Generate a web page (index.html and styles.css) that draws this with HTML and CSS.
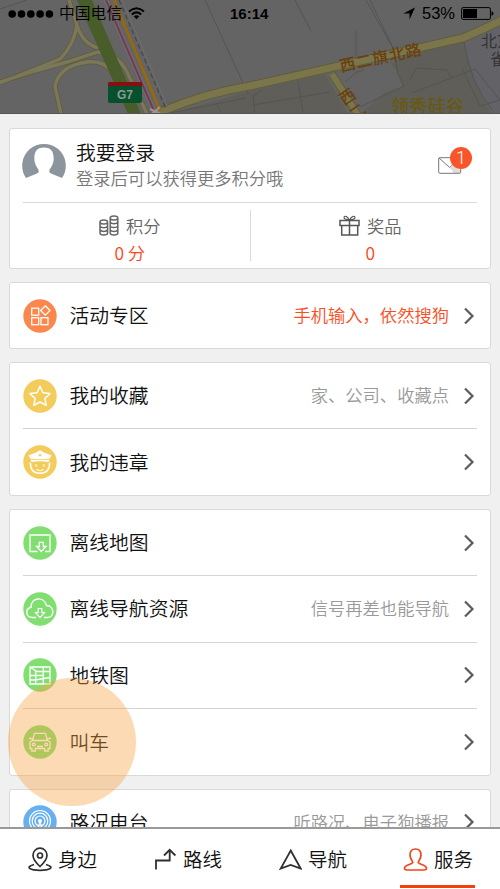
FILE: index.html
```html
<!DOCTYPE html>
<html lang="zh-CN">
<head>
<meta charset="utf-8">
<title>服务</title>
<link rel="stylesheet" href="styles.css">
</head>
<body>
<svg class="symbols" width="0" height="0" aria-hidden="true">
  <symbol id="chev" viewBox="0 0 12 18"><path d="M2 1.500 9.500 9 2 16.500" fill="none" stroke="#5c5c5c" stroke-width="2.200"/></symbol>
</svg>
<div class="screen">
  <header class="map">
    <svg class="map-art" viewBox="0 0 500 114" width="500" height="114">
      <rect width="500" height="114" fill="#646464"/>
      <path d="M390 63 470 36 500 62V114H360L385 92 403 87 396 70Z" fill="#605e59"/>
      <path d="M170 114 250 91 325 74 348 114Z" fill="#605e59"/>
      <path d="M464 38 500 28V114H491Q470 80 464 38Z" fill="#626267"/>
      <g fill="none" stroke="#545454" stroke-width="1">
        <path d="M0 9 27 0M205 0 248 94M295 0 311 31M356 31V62M366 0 394 50M370 0 396 54M165 114 246 98M218 106 222 114M298 82 303 112M253 105 330 92M394 50 398 74 404 86 360 107M410 80 416 68 447 70 452 79M412 93 475 69 500 100M463 70 480 106 500 100M464 42Q470 82 492 110M345 82 357 72 364 70M255 114 253 96 262 90"/>
      </g>
      <g fill="none" stroke="#625d38" stroke-width="5">
        <path d="M0 82 35 71 67 62 98 52Q118 54 127 72L147 114M69 0 77 25Q74 45 60 59L0 83M77 25Q82 43 98 48M61 114 55 86Q59 66 87 62 104 60 112 72"/>
      </g>
      <g fill="none" stroke="#7b775a" stroke-width="3.400">
        <path d="M0 82 35 71 67 62 98 52Q118 54 127 72L147 114M69 0 77 25Q74 45 60 59L0 83M77 25Q82 43 98 48M61 114 55 86Q59 66 87 62 104 60 112 72"/>
      </g>
      <path d="M77 0H92L141 114H128Z" fill="#485d29"/>
      <g fill="none" stroke="#625d38" stroke-width="9"><path d="M158 113Q205 93 250 86L463 38Q484 29 502 20"/><path d="M332 74 358 115" stroke-width="8"/></g>
      <g fill="none" stroke="#7a754b" stroke-width="7"><path d="M158 113Q205 93 250 86L463 38Q484 29 502 20"/><path d="M332 74 358 115" stroke-width="6"/></g>
      <g fill="none">
        <path d="M106 0 154 111" stroke="#737073" stroke-width="4"/>
        <path d="M106 0 154 111" stroke="#763954" stroke-width="2"/>
        <path d="M114 0 160 111" stroke="#9b6807" stroke-width="2.600"/>
        <path d="M119 0 166 109" stroke="#484848" stroke-width="1.300" stroke-dasharray="5 3"/>
        <path d="M122 0 168 108" stroke="#6e6e6e"/>
        <path d="M150 109 161 114M152 114 160 107" stroke="#a1918f" stroke-width="2"/>
      </g>
      <rect x="108" y="82" width="34" height="21" rx="2" fill="#07502d"/>
      <path d="M108 86V84Q108 82 110 82H140Q142 82 142 84V86Z" fill="#861010"/>
      <text class="shield" x="117" y="99">G7</text>
      <g class="road">
        <text transform="translate(341 72) rotate(-12)" textLength="83">西二旗北路</text>
        <text transform="translate(344 106) rotate(-34)">西</text>
        <text transform="translate(354 121) rotate(-34)">二</text>
      </g>
      <text class="place" x="391" y="113" textLength="73">领秀硅谷</text>
      <g class="poi"><text x="481" y="47">北京</text><text x="490" y="65">雀</text></g>
      <path d="M0 113.500H500" stroke="#555"/>
    </svg>
    <div class="status">
      <svg width="46" height="10" viewBox="0 0 46 10"><circle cx="4.200" cy="5" r="3.800"/><circle cx="13.500" cy="5" r="3.800"/><circle cx="22.800" cy="5" r="3.800"/><circle cx="32.100" cy="5" r="3.800"/><circle cx="41.400" cy="5" r="3.800"/></svg>
      <span class="carrier">中国电信</span>
      <svg width="17" height="13" viewBox="0 0 17 13"><g fill="none" stroke="#000" stroke-width="2"><path d="M1 4.500Q8.500-2 16 4.500M3.800 7.500Q8.500 3.300 13.200 7.500"/></g><path d="M5.700 9.300Q8.500 7 11.300 9.300L8.500 12.200Z"/></svg>
      <strong class="clock">16:14</strong>
      <svg class="loc" width="12" height="13" viewBox="0 0 12 13"><path d="M12 .5 6.500 12.500V6.500H.300Z"/></svg>
      <span class="pct">53%</span>
      <svg class="batt" width="33" height="13" viewBox="0 0 33 13"><rect x=".6" y=".6" width="28.800" height="11.800" rx="1.500" fill="none" stroke="#000"/><rect x="2" y="2" width="14" height="9"/><path d="M30.500 4.300Q32.500 4.500 32.500 6.500T30.500 8.700Z"/></svg>
    </div>
  </header>

  <main class="list">
    <section class="card profile">
      <div class="user">
        <svg class="avatar" width="44" height="36" viewBox="0 0 44 36"><path d="M4 35A21.800 21.800 0 1 1 40 35L29 30.500Q26 29 28 26 31 22 31.500 18C32.500 8 28.500 4.500 22 4.500S11.500 8 12.500 18Q13 22 16 26 18 29 15 30.500Z" fill="#8c959d"/></svg>
        <div class="who"><div class="name">我要登录</div><div class="hint">登录后可以获得更多积分哦</div></div>
        <div class="mail">
          <svg width="24" height="17" viewBox="0 0 24 17"><path d="M12 11 16 8.500 23 14V16H16Z" fill="#ddd"/><rect x=".7" y=".7" width="22" height="15.600" rx="1" fill="none" stroke="#777"/><path d="M1 1 11.700 10.500 22 1" fill="none" stroke="#777"/></svg>
          <span class="badge">1</span>
        </div>
      </div>
      <div class="stats">
        <div class="stat">
          <div class="stat-label">
            <svg width="20" height="21" viewBox="0 0 20 21"><g fill="none" stroke="#656565" stroke-width="1.500"><path d="M1 7V18Q1 20 4.800 20T8.600 18V7Q8.600 5 4.800 5T1 7Q1 9 4.800 9T8.600 7M1 11Q2 12.800 4.800 12.800T8.600 11M1 14.700Q2 16.500 4.800 16.500T8.600 14.700M11.200 3V18Q11.200 20 15 20T18.800 18V3Q18.800 1 15 1T11.200 3Q11.200 5 15 5T18.800 3M11.200 7Q12 8.800 15 8.800T18.800 7M11.200 11Q12 12.600 15 12.600T18.800 11M11.200 14.700Q12 16.500 15 16.500T18.800 14.700"/></g></svg>
            <span>积分</span>
          </div>
          <div class="value">0 分</div>
        </div>
        <div class="stat">
          <div class="stat-label">
            <svg width="21" height="21" viewBox="0 0 21 21"><g fill="none" stroke="#555" stroke-width="1.500"><rect x="1" y="5.500" width="19" height="5"/><path d="M2.700 10.500V20H18.700V10.500M10.500 5.500V20"/><path d="M10.500 5Q4.500 4.500 5 2 7-.3 10.500 5 14-.3 16 2 16.500 4.500 10.500 5" stroke-width="1.100"/></g></svg>
            <span>奖品</span>
          </div>
          <div class="value">0</div>
        </div>
      </div>
    </section>

    <section class="card">
      <div class="row">
        <svg class="ico" viewBox="0 0 34 34"><circle cx="17" cy="17" r="16.700" fill="#fb874c"/><g fill="none" stroke="#fff" stroke-width="1.300"><rect x="8.700" y="9.200" width="7" height="7"/><rect x="8.700" y="18.700" width="7" height="7"/><rect x="18" y="18.700" width="7" height="7"/><path d="M22.300 6.800 27 11.500 22.300 16.200 17.600 11.500Z"/></g></svg>
        <span class="label">活动专区</span><span class="note hot">手机输入，依然搜狗</span><svg class="chev"><use href="#chev"/></svg>
      </div>
    </section>

    <section class="card">
      <div class="row">
        <svg class="ico" viewBox="0 0 34 34"><circle cx="17" cy="17" r="16.700" fill="#f3cc5b"/><path d="M17 7.300 20 13.700 27 14.600 21.900 19.500 23.200 26.400 17 23 10.800 26.400 12.100 19.500 7 14.600 14 13.700Z" fill="none" stroke="#fff" stroke-width="1.500" stroke-linejoin="round"/></svg>
        <span class="label">我的收藏</span><span class="note">家、公司、收藏点</span><svg class="chev"><use href="#chev"/></svg>
      </div>
      <div class="row">
        <svg class="ico" viewBox="0 0 34 34"><circle cx="17" cy="17" r="16.700" fill="#f3cc5b"/><path d="M17 5.300Q22.500 8.800 28.500 10.300 28 12.500 26 14H8Q6 12.500 5.500 10.300 11.500 8.800 17 5.300ZM7.500 14.700H26.500L25.500 17Q17 15.500 8.500 17Z" fill="#fff"/><circle cx="17" cy="10.300" r="1.200" fill="#f3cc5b"/><path d="M7.300 17.500Q7.300 28.300 17 28.300T26.700 17.500" fill="none" stroke="#fff" stroke-width="1.500"/><path d="M13.300 19.300V21.800M20.700 19.300V21.800M13.500 24.500Q17 26.500 20.500 24.500" fill="none" stroke="#fff" stroke-width="1.200"/></svg>
        <span class="label">我的违章</span><svg class="chev"><use href="#chev"/></svg>
      </div>
    </section>

    <section class="card">
      <div class="row">
        <svg class="ico" viewBox="0 0 34 34"><circle cx="17" cy="17" r="16.700" fill="#80df70"/><g fill="none" stroke="#fff" stroke-width="1.300"><path d="M14.500 25.500H7V9H27V25.500H22"/><path d="M16.300 16.300H20.300V20.500H23L18.300 25.500 13.600 20.500H16.300Z"/></g></svg>
        <span class="label">离线地图</span><svg class="chev"><use href="#chev"/></svg>
      </div>
      <div class="row">
        <svg class="ico" viewBox="0 0 34 34"><circle cx="17" cy="17" r="16.700" fill="#80df70"/><g fill="none" stroke="#fff" stroke-width="1.400"><path d="M13 25.500H9.500C2.500 25.500 1.800 17 8 15.300 8 5 21 4 23.500 13.500 31.500 13.500 32 25.500 24.500 25.500H21"/><path d="M15.200 16.500H18.800V20.500H21.500L17 25.700 12.500 20.500H15.200Z" stroke-width="1.200"/></g></svg>
        <span class="label">离线导航资源</span><span class="note">信号再差也能导航</span><svg class="chev"><use href="#chev"/></svg>
      </div>
      <div class="row">
        <svg class="ico" viewBox="0 0 34 34"><circle cx="17" cy="17" r="16.700" fill="#80df70"/><g fill="none" stroke="#fff" stroke-width="1.300"><path d="M7 9H27V26H7ZM7 9 14 13.500H27M12.700 13V26M20.300 9V26M7 17.500H20.300M7 22H12.700L20.300 20.500 27 19.500"/></g></svg>
        <span class="label">地铁图</span><svg class="chev"><use href="#chev"/></svg>
      </div>
      <div class="row">
        <svg class="ico" viewBox="0 0 34 34"><circle cx="17" cy="17" r="16.700" fill="#80df70"/><g fill="none" stroke="#fff" stroke-width="1.300"><path d="M9.500 15.500 11.500 8.300H22.500L24.500 15.500ZM9.700 15 7 17V23.500H8.800V26H12.300V23.500H21.700V26H25.200V23.500H27V17L24.300 15M6 13.500H9.700M24.300 13.500H28M14 21.500H20"/><circle cx="10.800" cy="19.500" r="1.400"/><circle cx="23.200" cy="19.500" r="1.400"/></g></svg>
        <span class="label">叫车</span><svg class="chev"><use href="#chev"/></svg>
        <span class="touch"></span>
      </div>
    </section>

    <section class="card">
      <div class="row">
        <svg class="ico" viewBox="0 0 34 34"><circle cx="17" cy="17" r="16.700" fill="#66aff0"/><g fill="none" stroke="#fff" stroke-width="1.200"><circle cx="17" cy="16" r="10.500"/><circle cx="17" cy="16" r="7.800"/><circle cx="17" cy="16" r="5"/><path d="M17 17 13 29M17 17 21 29"/></g><circle cx="17" cy="16" r="2" fill="#fff"/></svg>
        <span class="label">路况电台</span><span class="note">听路况、电子狗播报</span><svg class="chev"><use href="#chev"/></svg>
      </div>
    </section>
  </main>

  <nav class="tabs">
    <a class="tab"><svg width="24" height="25" viewBox="0 0 24 25"><g fill="none" stroke="#303030" stroke-width="1.700"><path d="M12 19.500Q5 13 5 8.200A7 7 0 0 1 19 8.200Q19 13 12 19.500Z"/><circle cx="12" cy="8.500" r="2.500"/><path d="M6 17.500C-4 20.500 3 23.300 12 23.300S28 20.500 18 17.500"/></g></svg><span>身边</span></a>
    <a class="tab"><svg width="24" height="25" viewBox="0 0 24 25"><path d="M3 22.500V13.500H16.700V3M11 8.500 16.700 2.800 22.400 8.500" fill="none" stroke="#303030" stroke-width="1.800"/></svg><span>路线</span></a>
    <a class="tab"><svg width="24" height="25" viewBox="0 0 24 25"><path d="M12.700 3.500 22.700 21.500 12.700 18 2.700 21.500Z" fill="none" stroke="#303030" stroke-width="1.800"/></svg><span>导航</span></a>
    <a class="tab active"><svg width="25" height="25" viewBox="0 0 25 25"><path d="M9.800 15.500C9.500 13.300 7 12 7 8 7 4 9 2 12.500 2S18 4 18 8C18 12 15.500 13.300 15.200 15.500 16 17.500 24 18 23.500 21.500 23.300 23 22.500 23 21 23H4C2.500 23 1.700 23 1.500 21.500 1 18 9 17.500 9.800 15.500Z" fill="none" stroke="#f24416" stroke-width="1.700"/></svg><span>服务</span></a>
  </nav>
</div>
</body>
</html>
```
FILE: styles.css
```css
* { box-sizing: border-box; }
body {
  margin: 0;
  font-family: "Liberation Sans", "Noto Sans CJK SC", sans-serif;
  font-weight: 350;
  color: #111;
}
svg { display: block; flex: none; }
.symbols { position: absolute; }
.screen {
  width: 500px;
  height: 889px;
  display: flex;
  flex-direction: column;
  background: #f0f0f0;
  overflow: hidden;
}
.map { position: relative; flex: none; height: 114px; }
.shield { font: bold 12px "Liberation Sans", sans-serif; fill: #8c9c92; }
.road { font-size: 16px; font-weight: 500; fill: #69400f; }
.place { font-size: 18px; font-weight: 500; fill: #665912; }
.poi { font-size: 16px; font-weight: 400; fill: #343434; }
.status {
  position: absolute;
  inset: 0 0 auto;
  height: 27px;
  padding-left: 8px;
  display: flex;
  align-items: center;
  color: #000;
  font-size: 16px;
}
.carrier { width: 63px; margin: 0 6px 0 5px; font-size: 15.800px; line-height: 27px; white-space: nowrap; }
.clock { width: 38px; margin-left: 85px; font-size: 15px; font-weight: 700; }
.loc { margin-left: 135px; }
.pct { width: 33px; margin-left: 7px; font-size: 16.500px; }
.batt { margin-left: 6px; }

.list {
  flex: 1;
  min-height: 0;
  overflow: hidden;
  padding: 13.600px 9px 0;
  display: flex;
  flex-direction: column;
  gap: 13px;
}
.card {
  flex: none;
  background: #fff;
  border: 1px solid #d9d9d9;
  border-radius: 3px;
  padding: 0 13px;
}
.profile { height: 141.600px; }
.user {
  height: 74.500px;
  display: flex;
  align-items: flex-start;
  border-bottom: 1px solid #dadada;
}
.avatar { margin: 14px 0 0 -1px; }
.who { margin: 10px 0 0 10px; flex: 1; white-space: nowrap; }
.name { font-size: 19.800px; line-height: 28px; }
.hint { font-size: 17.300px; line-height: 25px; color: #777; }
.mail { position: relative; margin: 28px 15px 0 0; }
.badge {
  position: absolute;
  left: 12px;
  top: -10px;
  width: 22px;
  height: 22px;
  border-radius: 50%;
  background: #f9552b;
  color: #fff;
  font: 300 18px/22px Roboto, sans-serif;
  text-align: center;
}
.stats { display: flex; margin: 0 -13px; padding-top: 7px; }
.stat { flex: 1; height: 51px; }
.stat + .stat { border-left: 1px solid #dadada; }
.stat-label {
  display: flex;
  align-items: center;
  justify-content: center;
  gap: 7px;
  height: 31px;
  font-size: 17.300px;
  color: #666;
}
.stat-label span { margin-top: -1px; }
.value {
  text-align: center;
  font-family: "Noto Sans CJK SC", sans-serif;
  font-size: 17.300px;
  line-height: 24px;
  color: #fa4318;
}

.row {
  position: relative;
  height: 65.100px;
  display: flex;
  align-items: center;
}
.row + .row { height: 66.600px; border-top: 1px solid #d4d4d4; }
.ico { width: 34px; height: 34px; margin-left: -.5px; }
.label { margin-left: 13px; padding-bottom: 2px; font-size: 19.800px; white-space: nowrap; }
.note { margin-left: auto; padding-bottom: 2px; font-size: 17.300px; color: #999; white-space: nowrap; }
.hot { color: #fb4d22; }
.chev { width: 12px; height: 18px; margin: 0 2px 0 14px; }
.label + .chev { margin-left: auto; }
.touch {
  position: absolute;
  left: -15px;
  top: -31px;
  width: 128px;
  height: 128px;
  border-radius: 50%;
  background: rgba(247, 162, 65, .4);
}

.tabs {
  position: relative;
  flex: none;
  height: 62px;
  display: grid;
  grid-template-columns: 125px 125px 125px 125px;
  background: #fff;
  border-top: 2px solid #999;
}
.tab {
  margin: 0 25px;
  height: 59px;
  display: flex;
  align-items: center;
  gap: 6px;
  padding: 2px 0 0 3px;
  font-size: 19.500px;
  white-space: nowrap;
}
.tab span { padding-bottom: 3px; }
.active { border-bottom: 3px solid #ee430e; padding-top: 5px; }
```
